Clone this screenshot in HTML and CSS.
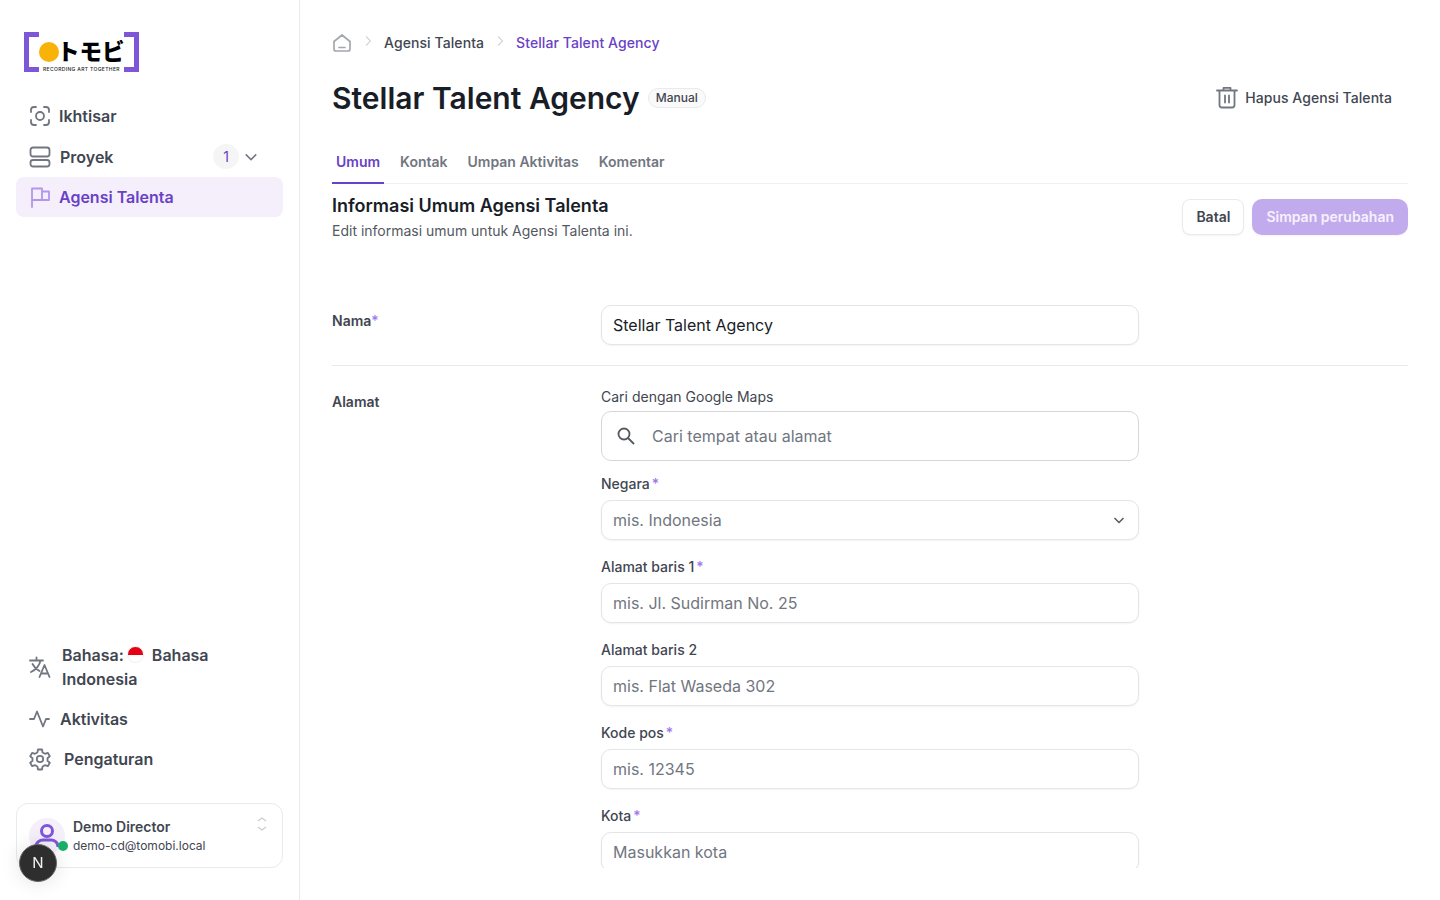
FILE: index.html
```html
<!DOCTYPE html>
<html>
  <head>
    <meta charset="utf-8">
    <title>Stellar Talent Agency</title>
    <link rel="stylesheet" href="styles.css">
  </head>
  <body>
    <div class="app">
      <aside class="sidebar">
        <div class="logo">
          <span class="logo-dot"></span>
          <span class="logo-jp">トモビ</span>
          <span class="logo-sub">RECORDING ART TOGETHER</span>
        </div>

        <nav class="nav">
          <a class="nav-item nav-tight">
            <svg class="nav-icon" viewBox="0 0 24 24"><path d="M3 8V6a3 3 0 0 1 3-3h2M16 3h2a3 3 0 0 1 3 3v2M21 16v2a3 3 0 0 1-3 3h-2M8 21H6a3 3 0 0 1-3-3v-2"/><circle cx="12" cy="12" r="4"/></svg>
            <span>Ikhtisar</span>
          </a>
          <a class="nav-item nav-proyek">
            <svg class="nav-icon" viewBox="0 0 24 24"><rect x="2.500" y="2.500" width="19" height="9" rx="2.500"/><rect x="2.500" y="15" width="19" height="6.500" rx="2.500"/></svg>
            <span class="nav-label">Proyek</span>
            <span class="count">1</span>
            <svg class="nav-chevron" viewBox="0 0 24 24"><path d="M5 8.500l7 7 7-7"/></svg>
          </a>
          <a class="nav-item nav-tight active">
            <svg class="nav-icon" viewBox="0 0 24 24"><path d="M4 22V3.500h10V15H4M14 6.500h7V15h-7"/></svg>
            <span>Agensi Talenta</span>
          </a>
        </nav>

        <div class="side-bottom">
          <a class="nav-item nav-lang">
            <svg class="nav-icon" viewBox="0 0 24 24"><path d="M2 5.500h13M8.500 2.500v3M12.500 5.500c-1 5-4.500 9-9.500 11.500M4.500 9c1.500 3 4 5.500 7 7M11.500 22l5-12 5 12M13 18.500h7"/></svg>
            <span>Bahasa: <i class="flag"></i> Bahasa<br>Indonesia</span>
          </a>
          <a class="nav-item">
            <svg class="nav-icon" viewBox="0 0 24 24"><path d="M2 12h4l3-7.500 6 15 3-7.500h3"/></svg>
            <span>Aktivitas</span>
          </a>
          <a class="nav-item nav-settings">
            <svg class="nav-icon" viewBox="0 0 24 24"><circle cx="12" cy="12" r="3.200"/><path d="M10 2.500h4l.6 3 2.300 1.300 2.900-1 2 3.400-2.300 2v2.600l2.300 2-2 3.400-2.900-1-2.300 1.300-.6 3h-4l-.6-3-2.300-1.300-2.900 1-2-3.400 2.300-2v-2.600l-2.300-2 2-3.400 2.900 1 2.300-1.300z"/></svg>
            <span>Pengaturan</span>
          </a>

          <div class="user-card">
            <div class="avatar">
              <svg viewBox="0 0 36 36"><circle cx="18" cy="13" r="5.500"/><path d="M7 29c0-5 4-7 7-7h8c3 0 7 2 7 7"/></svg>
              <span class="online"></span>
            </div>
            <div class="user-text">
              <div class="user-name">Demo Director</div>
              <div class="user-mail">demo-cd@tomobi.local</div>
            </div>
            <svg class="user-sort" viewBox="0 0 12 20"><path d="M2 6l4-3 4 3M2 12l4 3 4-3"/></svg>
          </div>
        </div>
      </aside>

      <main class="main">
        <div class="crumbs">
          <svg class="crumb-home" viewBox="0 0 20 20"><path d="M2 8.500 10 2l8 6.500V16a2 2 0 0 1-2 2H4a2 2 0 0 1-2-2zM7 14.500h6"/></svg>
          <svg class="crumb-sep" viewBox="0 0 10 12"><path d="M3 1.500 7.500 6 3 10.500"/></svg>
          <span>Agensi Talenta</span>
          <svg class="crumb-sep" viewBox="0 0 10 12"><path d="M3 1.500 7.500 6 3 10.500"/></svg>
          <span class="crumb-current">Stellar Talent Agency</span>
        </div>

        <div class="title-row">
          <h1>Stellar Talent Agency</h1>
          <span class="pill">Manual</span>
          <a class="delete">
            <svg viewBox="0 0 24 24"><path d="M2 5.500h20M8.500 5.500V2.800h7v2.700M4.500 5.500V20a2.500 2.500 0 0 0 2.500 2.500h10a2.500 2.500 0 0 0 2.500-2.500V5.500M10 10.500v7M14 10.500v7"/></svg>
            Hapus Agensi Talenta
          </a>
        </div>

        <div class="tabs">
          <a class="tab current">Umum</a>
          <a class="tab">Kontak</a>
          <a class="tab">Umpan Aktivitas</a>
          <a class="tab">Komentar</a>
        </div>

        <div class="section-head">
          <div>
            <h2>Informasi Umum Agensi Talenta</h2>
            <p>Edit informasi umum untuk Agensi Talenta ini.</p>
          </div>
          <div class="actions">
            <button class="btn">Batal</button>
            <button class="btn btn-primary">Simpan perubahan</button>
          </div>
        </div>

        <div class="row row-name">
          <div class="row-label">Nama<em>*</em></div>
          <div class="row-fields">
            <div class="input filled">Stellar Talent Agency</div>
          </div>
        </div>

        <div class="row row-address">
          <div class="row-label">Alamat</div>
          <div class="row-fields">
            <div class="field field-search">
              <label>Cari dengan Google Maps</label>
              <div class="input search">
                <svg viewBox="0 0 20 20"><circle cx="8" cy="8" r="5.500"/><path d="m12 12 6 6"/></svg>
                Cari tempat atau alamat
              </div>
            </div>
            <div class="field">
              <label>Negara<em class="req">*</em></label>
              <div class="input select">
                mis. Indonesia
                <svg viewBox="0 0 12 12"><path d="M1.500 4 6 8.500 10.500 4"/></svg>
              </div>
            </div>
            <div class="field">
              <label>Alamat baris 1<em class="req">*</em></label>
              <div class="input">mis. Jl. Sudirman No. 25</div>
            </div>
            <div class="field">
              <label>Alamat baris 2</label>
              <div class="input">mis. Flat Waseda 302</div>
            </div>
            <div class="field">
              <label>Kode pos<em class="req">*</em></label>
              <div class="input">mis. 12345</div>
            </div>
            <div class="field">
              <label>Kota<em class="req">*</em></label>
              <div class="input">Masukkan kota</div>
            </div>
          </div>
        </div>
      </main>
    </div>

    <div class="dev-badge">N</div>
  </body>
</html>
```

FILE: styles.css
```css
* {
  box-sizing: border-box;
}

html,
body {
  margin: 0;
  height: 900px;
  overflow: hidden;
  background: #fff;
  font-family: Inter, "Noto Sans CJK JP", sans-serif;
  color: #414651;
}

.app {
  display: flex;
  height: 900px;
}

/* sidebar */
.sidebar {
  width: 300px;
  flex: none;
  display: flex;
  flex-direction: column;
  padding: 32px 16px;
  border-right: 1px solid #e9eaeb;
}

.logo {
  position: relative;
  width: 115px;
  height: 40px;
  margin-left: 8px;
  border-left: 5px solid #7e57d8;
  border-right: 5px solid #7e57d8;
}

.logo::before,
.logo::after {
  content: "";
  position: absolute;
  left: 0;
  right: 0;
  top: 0;
  height: 5px;
  border-left: 10px solid #7e57d8;
  border-right: 10px solid #7e57d8;
}

.logo::after {
  top: auto;
  bottom: 0;
}

.logo-dot {
  position: absolute;
  left: 10px;
  top: 10px;
  width: 20px;
  height: 20px;
  border-radius: 50%;
  background: #f9b207;
}

.logo-jp {
  position: absolute;
  left: 28px;
  top: 6px;
  font-size: 22.500px;
  line-height: 27px;
  font-weight: 900;
  color: #000;
  white-space: nowrap;
}

.logo-sub {
  position: absolute;
  left: 14px;
  bottom: 0;
  font-size: 5px;
  line-height: 6px;
  font-weight: 500;
  letter-spacing: 0.35px;
  color: #222;
  white-space: nowrap;
}

.nav {
  margin-top: 24px;
  display: flex;
  flex-direction: column;
}

.nav-item {
  display: flex;
  align-items: center;
  gap: 8px;
  min-height: 40px;
  padding: 0 12px;
  font-size: 16px;
  line-height: 24px;
  font-weight: 600;
  color: #414651;
  border-radius: 8px;
}

.nav-tight {
  gap: 7px;
}

.nav-icon {
  width: 24px;
  height: 24px;
  flex: none;
  fill: none;
  stroke: #717680;
  stroke-width: 1.800;
  stroke-linecap: round;
  stroke-linejoin: round;
}

.nav-proyek {
  height: 41px;
}

.nav-label {
  flex: 1;
}

.count {
  width: 26px;
  height: 25px;
  border-radius: 50%;
  background: #f5f5f5;
  color: #6941c6;
  font-size: 14px;
  font-weight: 400;
  line-height: 25px;
  text-align: center;
  margin-right: -5px;
}

.nav-chevron {
  width: 18px;
  height: 18px;
  margin-right: 11px;
  fill: none;
  stroke: #717680;
  stroke-width: 2;
}

.nav-item.active {
  background: #f4effb;
  color: #6941c6;
}

.nav-item.active .nav-icon {
  stroke: #b395ea;
}

.side-bottom {
  margin-top: auto;
  display: flex;
  flex-direction: column;
}

.nav-lang {
  gap: 10px;
  padding-right: 60px;
  min-height: 48px;
  margin-bottom: 8px;
}

.flag {
  display: inline-block;
  width: 17px;
  height: 17px;
  vertical-align: -2px;
  margin: 0 4px 0 -1px;
  border-radius: 50%;
  border: 1px solid #eee;
  background: linear-gradient(#e70011 50%, #fff 50%);
}

.nav-settings {
  gap: 12px;
}

.user-card {
  position: relative;
  display: flex;
  gap: 8px;
  height: 65px;
  margin-top: 24px;
  padding: 14px 12px;
  border: 1px solid #e9eaeb;
  border-radius: 12px;
}

.avatar {
  position: relative;
  width: 36px;
  height: 36px;
  flex: none;
  border-radius: 50%;
  background: #f4effb;
}

.avatar svg {
  display: block;
  fill: none;
  stroke: #7e57d8;
  stroke-width: 3;
}

.online {
  position: absolute;
  right: -3px;
  bottom: 3px;
  width: 10px;
  height: 10px;
  border-radius: 50%;
  background: #17b26a;
}

.user-text {
  margin-top: -1px;
}

.user-name {
  font-size: 14px;
  line-height: 20px;
  font-weight: 600;
}

.user-mail {
  font-size: 12px;
  line-height: 18px;
}

.user-sort {
  position: absolute;
  right: 14px;
  top: 11px;
  width: 12px;
  height: 20px;
  fill: none;
  stroke: #c9cbcf;
  stroke-width: 1.100;
}

.dev-badge {
  position: fixed;
  left: 19px;
  top: 844px;
  width: 38px;
  height: 38px;
  border-radius: 50%;
  border: 1px solid #666;
  background: #2e2e2e;
  color: #f2f2f2;
  font-size: 15px;
  line-height: 36px;
  text-align: center;
  box-shadow: 0 0 20px rgba(0, 0, 0, 0.12);
}

/* main area */
.main {
  flex: 1;
  height: 868px;
  overflow: hidden;
  padding: 33px 32px 0;
}

.crumbs {
  display: flex;
  align-items: center;
  gap: 11px;
  height: 20px;
  font-size: 14px;
  font-weight: 500;
  line-height: 20px;
  letter-spacing: 0.08px;
}

.crumb-home {
  width: 20px;
  height: 20px;
  fill: none;
  stroke: #a4a7ae;
  stroke-width: 1.700;
  stroke-linejoin: round;
  stroke-linecap: round;
}

.crumb-sep {
  width: 10px;
  height: 12px;
  margin-top: -4px;
  fill: none;
  stroke: #d5d7da;
  stroke-width: 1.300;
}

.crumb-current {
  color: #6941c6;
}

.title-row {
  display: flex;
  align-items: center;
  gap: 8px;
  height: 40px;
  margin-top: 25px;
  padding-right: 16px;
}

h1 {
  margin: 0;
  font-size: 30px;
  line-height: 38px;
  font-weight: 600;
  color: #181d27;
}

.pill {
  padding: 0 7px;
  height: 20px;
  border: 1px solid #e9eaeb;
  border-radius: 10px;
  background: #fafafa;
  font-size: 12px;
  line-height: 18px;
  font-weight: 500;
}

.delete {
  margin-left: auto;
  display: flex;
  align-items: center;
  gap: 6px;
  font-size: 14px;
  font-weight: 500;
  letter-spacing: 0.05px;
  margin-top: -2px;
}

.delete svg {
  width: 24px;
  height: 24px;
  fill: none;
  stroke: #717680;
  stroke-width: 1.800;
  stroke-linecap: round;
  stroke-linejoin: round;
}

.tabs {
  display: flex;
  gap: 12px;
  height: 42px;
  margin-top: 24px;
  border-bottom: 1px solid #f0f0f1;
}

.tab {
  height: 42px;
  padding: 10px 4px 0;
  font-size: 14px;
  line-height: 20px;
  font-weight: 600;
  color: #717680;
}

.tab.current {
  color: #6941c6;
  border-bottom: 2px solid #6941c6;
}

.section-head {
  display: flex;
  justify-content: space-between;
  height: 121px;
  padding-top: 9px;
}

h2 {
  margin: 0;
  font-size: 18px;
  line-height: 26px;
  font-weight: 600;
  color: #181d27;
}

.section-head p {
  margin: 2px 0 0;
  font-size: 14px;
  line-height: 20px;
  color: #535862;
}

.actions {
  display: flex;
  gap: 8px;
  margin-top: 6px;
  height: 36px;
}

.btn {
  height: 36px;
  padding: 0 13px 2px;
  border: 1px solid #e9eaeb;
  border-radius: 8px;
  background: #fff;
  font-family: inherit;
  font-size: 14px;
  font-weight: 600;
  color: #414651;
  box-shadow: 0 1px 2px rgba(10, 13, 18, 0.05);
}

.btn-primary {
  padding: 0 14px 2px;
  border: 0;
  border-radius: 10px;
  background: #c2abed;
  color: #f6f1fd;
}

.row {
  display: flex;
}

.row-name {
  padding-bottom: 20px;
  border-bottom: 1px solid #e9eaeb;
}

.row-address {
  padding-top: 21px;
}

.row-label {
  width: 269px;
  flex: none;
  padding-top: 6px;
  font-size: 14px;
  line-height: 20px;
  font-weight: 600;
}

.row-address .row-label {
  padding-top: 5px;
}

em {
  font-style: normal;
  font-weight: 500;
  color: #9e77ed;
}

.req {
  margin-left: 2px;
}

.row-fields {
  width: 538px;
  flex: none;
}

.field {
  margin-bottom: 17px;
}

.field label {
  display: block;
  margin-bottom: 6px;
  font-size: 14px;
  line-height: 20px;
  font-weight: 500;
}

.field-search {
  margin-bottom: 13px;
}

.field-search label {
  margin-bottom: 4px;
  font-weight: 400;
}

.input {
  display: flex;
  align-items: center;
  height: 40px;
  padding: 0 11px;
  border: 1px solid #e4e5e7;
  border-radius: 10px;
  background: #fff;
  font-size: 16px;
  color: #717680;
  box-shadow: 0 1px 2px rgba(10, 13, 18, 0.05);
}

.input.filled {
  color: #181d27;
}

.search {
  height: 50px;
  gap: 16px;
  padding-left: 14px;
  border-color: #d5d7da;
  box-shadow: none;
}

.search svg {
  width: 20px;
  height: 20px;
  flex: none;
  fill: none;
  stroke: #535862;
  stroke-width: 1.800;
}

.select {
  justify-content: space-between;
}

.select svg {
  width: 12px;
  height: 12px;
  margin-right: 2px;
  fill: none;
  stroke: #535862;
  stroke-width: 1.500;
}
```
